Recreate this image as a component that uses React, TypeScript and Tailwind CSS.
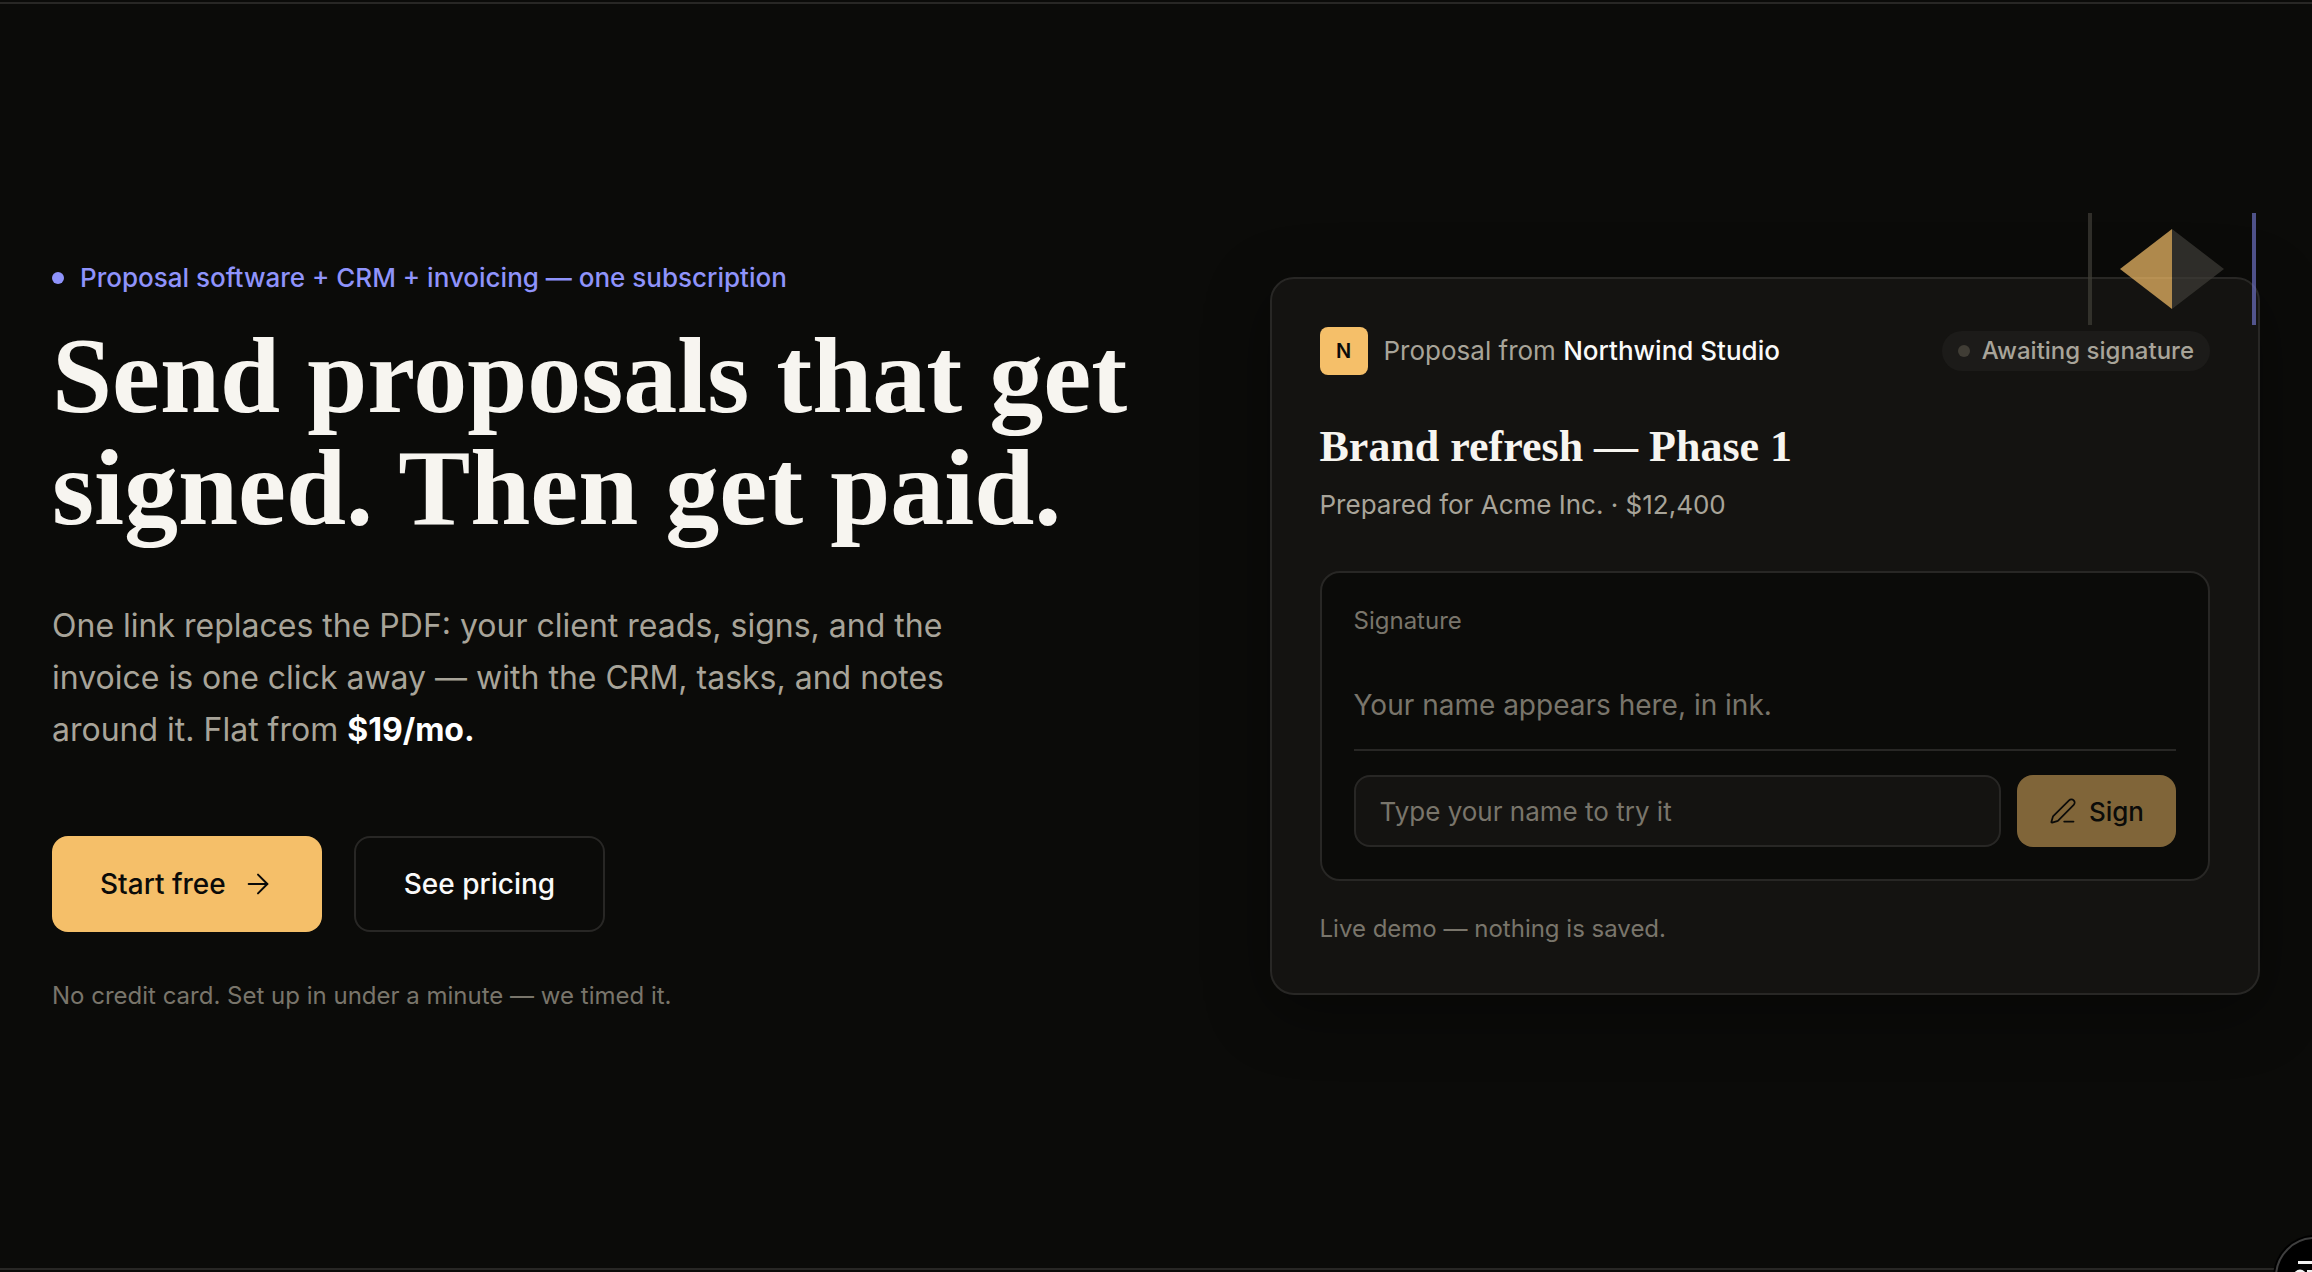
import { ArrowRight, PenLine } from "lucide-react";
import React, { useState } from "react";

function CornerMark() {
  return (
    <svg
      viewBox="0 0 168 112"
      className="absolute -top-[66px] right-[2px] h-[112px] w-[168px] opacity-70"
      aria-hidden="true"
    >
      <rect x="0" y="0" width="4" height="112" fill="#403e37" />
      <rect x="164" y="0" width="4" height="112" fill="#6d70c0" />
      <path d="M84 16 32 56l52 40z" fill="#f5bf69" />
      <path d="M84 16l52 40-52 40z" fill="#3e3c37" />
    </svg>
  );
}

function ProposalCard() {
  const [name, setName] = useState("");

  return (
    <div className="relative rounded-3xl border-2 border-[#282725] bg-[#141311] p-12 shadow-[0_16px_64px_rgba(0,0,0,0.4)]">
      <CornerMark />
      <div className="flex items-center justify-between">
        <div className="flex items-center gap-4">
          <span className="flex size-12 items-center justify-center rounded-lg bg-[#f5bf69] text-[20px] font-semibold text-[#0b0b09]">
            N
          </span>
          <p className="text-[26px] leading-10 text-[#a8a499]">
            Proposal from{" "}
            <span className="font-medium text-[#fafaf9]">Northwind Studio</span>
          </p>
        </div>
        <span className="flex h-10 items-center gap-3 rounded-full bg-[#1c1b19] px-4 text-2xl font-medium text-[#a8a499]">
          <span className="size-3 rounded-full bg-[#403d35]" />
          Awaiting signature
        </span>
      </div>
      <h2 className="mt-[42px] font-['Liberation_Serif',serif] text-[44px] leading-[60px] font-bold text-[#f7f5f0]">
        Brand refresh — Phase 1
      </h2>
      <p className="mt-2 text-[26px] leading-10 text-[#a8a499]">
        Prepared for Acme Inc. · $12,400
      </p>
      <div className="mt-[46px] rounded-[20px] border-2 border-[#282725] bg-[#0b0b09] p-8">
        <label htmlFor="signer" className="block text-2xl text-[#79756b]">
          Signature
        </label>
        <p className="mt-8 border-b-2 border-[#282725] pt-4 pb-6 text-[28px] leading-10 text-[#79756b]">
          {name || "Your name appears here, in ink."}
        </p>
        <div className="mt-6 flex gap-4">
          <input
            id="signer"
            type="text"
            value={name}
            onChange={(e) => setName(e.target.value)}
            placeholder="Type your name to try it"
            className="h-18 min-w-0 flex-1 rounded-2xl border-2 border-[#282725] bg-[#141311] px-6 text-[26px] text-[#fafaf9] outline-none placeholder:text-[#79756b]"
          />
          <button
            type="button"
            disabled={!name}
            className="flex h-18 items-center gap-3 rounded-2xl bg-[#f5bf69] px-8 text-[26px] font-medium text-[#0b0b09] disabled:opacity-50"
          >
            <PenLine size={28} strokeWidth={1.5} />
            Sign
          </button>
        </div>
      </div>
      <p className="mt-8 text-2xl text-[#79756b]">
        Live demo — nothing is saved.
      </p>
    </div>
  );
}

// floating round button that hangs off the bottom right corner
function SettingsButton() {
  return (
    <button
      type="button"
      aria-label="Settings"
      className="absolute -right-[43px] -bottom-[45px] size-20 rounded-full border-2 border-[#3f3f3f] bg-black shadow-[0_0_0_2px_#000]"
    >
      <svg viewBox="0 0 76 76" className="size-full" aria-hidden="true">
        <rect x="21" y="22" width="34" height="3" fill="#f2f2f2" />
        <circle cx="23" cy="37" r="5" fill="none" stroke="#f2f2f2" strokeWidth="3" />
        <rect x="30" y="31" width="25" height="3" fill="#f2f2f2" />
      </svg>
    </button>
  );
}

export default function App() {
  return (
    <div className="relative flex min-h-screen flex-col overflow-hidden bg-[#0b0b09] py-[2px] font-['Inter',sans-serif]">
      <main className="grid flex-1 grid-cols-[1.1fr_1fr] items-center gap-32 border-y-2 border-[#282725] px-[52px]">
        <div>
          <p className="flex items-center gap-4 text-[26px] leading-11 font-medium text-[#8f93fb]">
            <span className="size-3 rounded-full bg-[#8f93fb]" />
            Proposal software + CRM + invoicing — one subscription
          </p>
          <h1 className="mt-5 font-['Liberation_Serif',serif] text-[108px] leading-[112px] font-bold text-[#f7f5f0]">
            Send proposals that get signed. Then get paid.
          </h1>
          <p className="mt-14 max-w-[920px] text-[32px] leading-[52px] text-[#a8a499]">
            One link replaces the PDF: your client reads, signs, and the
            invoice is one click away — with the CRM, tasks, and notes around
            it. Flat from <strong className="text-white">$19/mo.</strong>
          </p>
          <div className="mt-20 flex gap-8">
            <a
              href="#start"
              className="flex h-24 items-center gap-4 rounded-2xl bg-[#f5bf69] px-12 text-[28px] font-medium text-[#0b0b09]"
            >
              Start free
              <ArrowRight size={32} strokeWidth={1.5} />
            </a>
            <a
              href="#pricing"
              className="flex h-24 items-center rounded-2xl border-2 border-[#282725] px-12 text-[28px] font-medium text-[#fafaf9]"
            >
              See pricing
            </a>
          </div>
          <p className="mt-11 text-2xl leading-10 text-[#79756b]">
            No credit card. Set up in under a minute — we timed it.
          </p>
        </div>
        <ProposalCard />
      </main>
      <SettingsButton />
    </div>
  );
}
